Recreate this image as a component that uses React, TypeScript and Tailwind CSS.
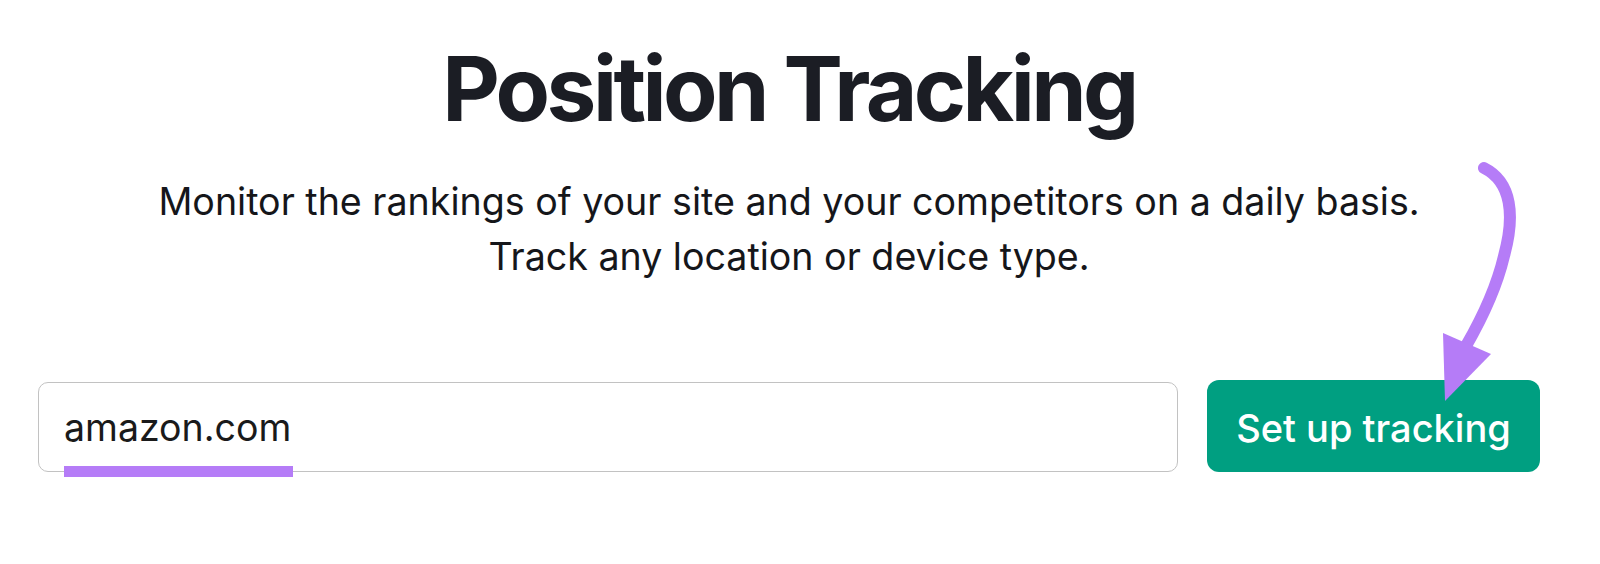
import React, { useState } from "react";

const Arrow = () => (
  <svg
    className="pointer-events-none absolute left-0 top-0"
    width={1600}
    height={564}
    viewBox="0 0 1600 564"
    fill="none"
  >
    <path
      d="M1484 168 C1512 182 1515 216 1504 256 C1496 290 1481 320 1466 346"
      stroke="#b57cf7"
      strokeWidth={12}
      strokeLinecap="round"
    />
    <polygon points="1443,333 1491,354 1445,401" fill="#b57cf7" />
  </svg>
);

const App: React.FC = () => {
  const [domain, setDomain] = useState<string>("amazon.com");

  return (
    <div className="relative h-[564px] w-[1600px] overflow-hidden bg-white font-['Inter',sans-serif]">
      <div className="flex flex-col items-center pl-[38px] pr-[60px]">
        <h1 className="pt-[44px] text-[89px] font-bold leading-[89px] tracking-[-0.04em] text-[#1b1d24]">
          Position Tracking
        </h1>
        <p className="mt-[41px] text-center text-[37.6px] leading-[55px] text-[#15161a]">
          Monitor the rankings of your site and your competitors on a daily basis.
          <br />
          Track any location or device type.
        </p>

        <form
          className="mt-[96px] flex w-full items-end gap-[29px]"
          onSubmit={(e) => e.preventDefault()}
        >
          <div className="relative flex-1">
            <input
              className="h-[90px] w-full rounded-[10px] border-[1.5px] border-[#c2c2c2] bg-white pl-[25px] text-[37.5px] text-[#1a1a1a] focus:outline-none"
              type="text"
              value={domain}
              onChange={(e) => setDomain(e.target.value)}
            />
            {/* highlight under the typed domain */}
            <div className="absolute left-[26px] top-[84px] h-[11px] w-[229px] bg-[#b57cf7]" />
          </div>
          <button
            type="submit"
            className="h-[92px] w-[333px] rounded-[12px] bg-[#009f81] pt-[4px] text-[38px] font-medium text-white"
          >
            Set up tracking
          </button>
        </form>
      </div>
      <Arrow />
    </div>
  );
};

export default App;
